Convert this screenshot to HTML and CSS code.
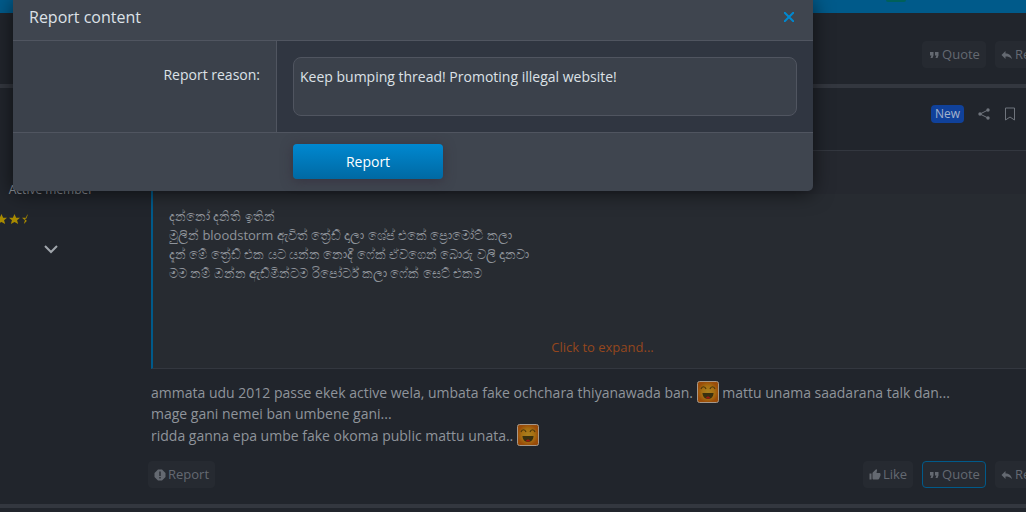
FILE: index.html
```html
<!DOCTYPE html>
<html lang="en">
<head>
    <meta charset="UTF-8">
    <meta name="viewport" content="width=device-width, initial-scale=1.0">
    <title>Report content</title>
    <link rel="stylesheet" href="styles.css">
</head>
<body>

<!-- Shared icons -->
<svg class="sprite" aria-hidden="true">
    <symbol id="i-quote" viewBox="0 0 12 12"><path d="M2 3h3.500v3.500L4.500 9H2.500L3.500 6.500H2zM7 3h3.500v3.500L9.500 9H7.500L8.500 6.500H7z"/></symbol>
    <symbol id="i-reply" viewBox="0 0 12 12"><path d="M4.500 2v2.500C8 4.500 10 6 11 10 9 8 7 7.500 4.500 7.500V10L.5 6z"/></symbol>
    <symbol id="i-like" viewBox="0 0 24 24"><path d="M1 21h4V9H1zM23 10c0-1-1-2-2-2h-6l1-5v-1L14.500 0 7.500 7C7 8 7 8 7 9v10c0 1 1 2 2 2h9c1 0 1.500-.5 2-1l3-7z"/></symbol>
    <symbol id="i-alert" viewBox="0 0 12 12"><path fill-rule="evenodd" d="M4 .5h4L11.500 4v4L8 11.500H4L.5 8V4zM5.300 2.500v4.500h1.400V2.500zM5.300 8v1.500h1.400V8z"/></symbol>
    <symbol id="i-star" viewBox="0 0 12 12"><path d="M6 0l1.800 4H12L8.800 6.800 10 11 6 8.600 2 11l1.200-4.200L0 4h4.200z"/></symbol>
    <symbol id="i-smile" viewBox="0 0 22 22">
        <rect x=".5" y=".5" width="21" height="21" rx="2" fill="url(#face)" stroke="#a5988b"/>
        <path d="M4 8c1-3 4-3 5 0M13 8c1-3 4-3 5 0" fill="none" stroke="#4f3a0c" stroke-width="1.200"/>
        <path d="M5.500 12h11c0 3-2 6-5.500 6s-5.500-3-5.500-6z" fill="#39300f"/>
        <path d="M9 17c0-2 4-2 4 0-1 1-3 1-4 0z" fill="#9c1812"/>
    </symbol>
    <radialGradient id="face"><stop offset="0" stop-color="#a98120"/><stop offset=".6" stop-color="#a66f12"/><stop offset="1" stop-color="#9a4c08"/></radialGradient>
</svg>

<div class="page">
    <nav class="topbar"><span class="topbar-badge"></span></nav>

    <article class="post post-prev">
        <div class="post-main">
            <div class="actions">
                <a class="action" href="#"><svg class="icon"><use href="#i-quote"/></svg>Quote</a>
                <a class="action" href="#"><svg class="icon"><use href="#i-reply"/></svg>Reply</a>
            </div>
        </div>
    </article>

    <article class="post">
        <aside class="user">
            <div class="user-title">Active member</div>
            <div class="stars">
                <svg><use href="#i-star"/></svg>
                <svg><use href="#i-star"/></svg>
                <svg><use href="#i-star"/></svg>
                <svg><use href="#i-star"/></svg>
                <svg viewBox="0 0 12 12"><path d="M6 0v2L4.800 5l-2 .5L5 7v1L2 11l1.200-4.200L0 4h4.200z"/></svg>
            </div>
            <button class="user-more" type="button" aria-label="Show user details">
                <svg viewBox="0 0 14 9"><path d="M1 1l6 6 6-6"/></svg>
            </button>
        </aside>
        <div class="post-main">
            <header class="post-header">
                <span class="new">New</span>
                <a href="#" aria-label="Share"><svg class="share" viewBox="0 0 12 12"><path d="M10 2L2 6l8 4" fill="none" stroke="currentColor"/><circle cx="10" cy="2" r="1.700"/><circle cx="2" cy="6" r="1.700"/><circle cx="10" cy="10" r="1.700"/></svg></a>
                <a href="#" aria-label="Bookmark"><svg class="bookmark" viewBox="0 0 12 14"><path d="M1.500 1h9v12L6 10l-4.500 3z"/></svg></a>
            </header>
            <blockquote class="quote">
                <div class="quote-title"></div>
                <p class="quote-text" lang="si">දන්නෝ දනිති ඉතින්<br>
                මුලින් bloodstorm ඇවිත් ත්‍රේඩ් දාලා ශේප් එකේ ප්‍රොමෝට් කලා<br>
                දැන් මේ ත්‍රේඩ් එක යට යන්න නොදී ෆේක් ඒවගෙන් බොරු වලි දානවා<br>
                මම නම් ඔන්න ඇඩ්මින්ටම රිපෝර්ට් කලා ෆේක් සෙට් එකම</p>
                <a class="expand" href="#">Click to expand...</a>
            </blockquote>
            <p class="message">ammata udu 2012 passe ekek active wela, umbata fake ochchara thiyanawada ban. <svg class="smile"><use href="#i-smile"/></svg> mattu unama saadarana talk dan...<br>
            mage gani nemei ban umbene gani...<br>
            ridda ganna epa umbe fake okoma public mattu unata.. <svg class="smile"><use href="#i-smile"/></svg></p>
            <footer class="actions">
                <a class="action action-report" href="#"><svg class="icon"><use href="#i-alert"/></svg>Report</a>
                <a class="action" href="#"><svg class="icon"><use href="#i-like"/></svg>Like</a>
                <a class="action action-active" href="#"><svg class="icon"><use href="#i-quote"/></svg>Quote</a>
                <a class="action" href="#"><svg class="icon"><use href="#i-reply"/></svg>Reply</a>
            </footer>
        </div>
    </article>
</div>

<!-- Report dialog -->
<div class="dialog" role="dialog" aria-labelledby="dialog-title">
    <div class="dialog-header">
        <h2 id="dialog-title">Report content</h2>
        <button class="close" type="button" aria-label="Close"><svg viewBox="0 0 10 10"><path d="M0 0l10 10M10 0L0 10"/></svg></button>
    </div>
    <form>
        <div class="form-row">
            <label for="reason">Report reason:</label>
            <div class="form-field">
                <textarea id="reason" name="reason" spellcheck="false">Keep bumping thread! Promoting illegal website!</textarea>
            </div>
        </div>
        <div class="form-submit">
            <button class="btn-primary" type="submit">Report</button>
        </div>
    </form>
</div>

</body>
</html>
```
FILE: styles.css
```css
* {
    box-sizing: border-box;
}

body {
    margin: 0;
    height: 100vh;
    overflow: hidden;
    background: #21252c;
    color: #8f949b;
    font-family: "Open Sans", "Noto Sans", sans-serif;
    font-size: 14px;
}

a {
    color: inherit;
    text-decoration: none;
}

.sprite {
    position: absolute;
    width: 0;
    height: 0;
}

.page {
    margin: 0 -42px 0 -33px;
}

.topbar {
    display: flex;
    justify-content: flex-end;
    height: 13px;
    padding-right: 162px;
    background: #005a8a;
}

.topbar-badge {
    width: 20px;
    height: 2px;
    border-radius: 0 0 4px 4px;
    background: #00605a;
}

/* Posts */
.post {
    display: grid;
    grid-template-columns: 168px 1fr;
    border-bottom: 4px solid #33373f;
}

.post-prev {
    padding-top: 28px;
}

.post-main {
    grid-column: 2;
    padding: 0 15px 16px 16px;
}

.user {
    display: flex;
    flex-direction: column;
    align-items: center;
    padding-top: 92px;
}

.user-title {
    font-size: 12px;
    line-height: 20px;
}

.stars {
    display: flex;
    align-self: flex-start;
    gap: 2px;
    margin-top: 14px;
    margin-left: 3px;
}

.stars svg {
    width: 11px;
    height: 11px;
    fill: #a88a00;
}

.user-more {
    margin-top: 20px;
    padding: 0;
    border: 0;
    background: none;
}

.user-more svg {
    display: block;
    width: 14px;
    height: 9px;
    fill: none;
    stroke: #a0a6ac;
    stroke-width: 2;
}

.post-header {
    display: flex;
    align-items: center;
    justify-content: flex-end;
    gap: 14px;
    height: 62px;
    padding: 0 37px 10px 0;
    color: #6f747c;
}

.post-header svg {
    display: block;
    fill: currentColor;
}

.post-header .share {
    width: 12px;
    height: 12px;
}

.post-header .bookmark {
    width: 12px;
    height: 14px;
    fill: none;
    stroke: currentColor;
}

.new {
    padding: 0 4px;
    border-radius: 4px;
    background: #10419a;
    color: #a4b2cc;
    font-size: 12px;
    line-height: 18px;
}

/* Quoted message */
.quote {
    display: flex;
    flex-direction: column;
    min-height: 219px;
    margin: 0;
    border: 1px solid #33373f;
    border-left: 2px solid #005a8a;
    background: #272b31;
    font-size: 13px;
    line-height: 19px;
}

.quote-title {
    height: 43px;
    background: #25282f;
}

.quote-text {
    margin: 0;
    padding: 13px 16px;
}

.expand {
    align-self: center;
    margin-top: auto;
    margin-bottom: 11px;
    color: #95471d;
}

.message {
    margin: 12px 0 15px;
    line-height: 21px;
    white-space: nowrap;
}

.smile {
    width: 22px;
    height: 22px;
    vertical-align: -5px;
}

.actions {
    display: flex;
    justify-content: flex-end;
    gap: 9px;
    margin-left: -3px;
    margin-right: -1px;
}

.action {
    display: flex;
    align-items: center;
    gap: 2px;
    padding: 0 5px;
    border: 1px solid #262a31;
    border-radius: 4px;
    background: #262a31;
    color: #646971;
    font-size: 13px;
    line-height: 25px;
}

.action-report {
    margin-right: auto;
}

.action-active {
    border-color: #005a8a;
}

.icon {
    width: 12px;
    height: 12px;
    fill: currentColor;
}

/* Dialog lies over the page */
.dialog {
    position: absolute;
    top: 0;
    left: 13px;
    width: 78%;
    max-width: 800px;
    border-radius: 0 0 5px 5px;
    background: #3f454f;
    color: #dde1e7;
    box-shadow: 0 2px 20px rgba(0, 0, 0, 0.6);
}

.dialog-header {
    display: flex;
    align-items: center;
    justify-content: space-between;
    height: 41px;
    padding: 0 19px 6px 16px;
    border-bottom: 1px solid #505560;
}

.dialog-header h2 {
    margin: 0;
    font-size: 16px;
    font-weight: normal;
}

.close {
    padding: 0;
    border: 0;
    background: none;
}

.close svg {
    display: block;
    width: 10px;
    height: 10px;
    fill: none;
    stroke: #0088d0;
    stroke-width: 2;
}

.form-row {
    display: grid;
    grid-template-columns: 33% 1fr;
    border-bottom: 1px solid #505560;
}

.form-row label {
    padding: 24px 16px;
    border-right: 1px solid #505560;
    background: #3b414b;
    line-height: 20px;
    text-align: right;
}

.form-field {
    padding: 16px;
    background: #303641;
}

textarea {
    display: block;
    width: 100%;
    height: 59px;
    padding: 8px 6px;
    border: 1px solid #505560;
    border-radius: 8px;
    background: #3b414b;
    color: inherit;
    font: inherit;
    line-height: 22px;
    resize: none;
}

.form-submit {
    padding: 11px 16px 12px 35%;
}

.btn-primary {
    width: 150px;
    height: 35px;
    border: 0;
    border-radius: 4px;
    background: linear-gradient(#0088d0, #0069a3);
    box-shadow: 0 2px 12px rgba(50, 40, 55, 0.6);
    color: #fff;
    font: inherit;
}
```
